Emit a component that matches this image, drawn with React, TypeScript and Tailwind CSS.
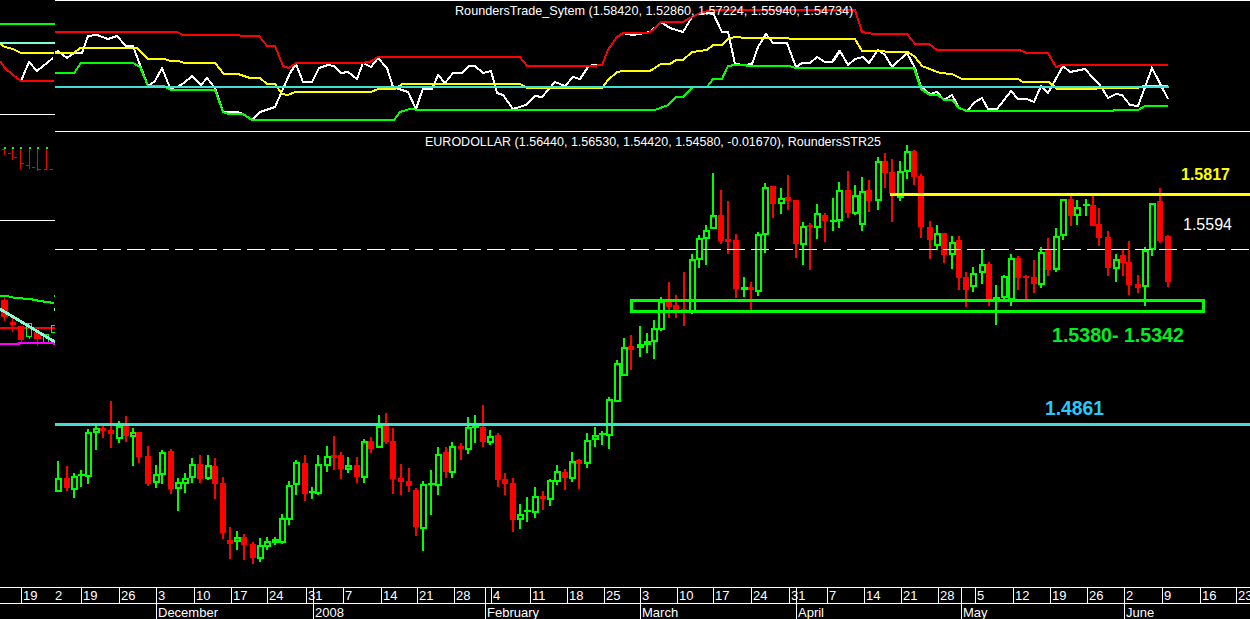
import React from "react";

type C = [number, number, number, number, number, 0 | 1];
const R: 0 = 0;
const G: 1 = 1;

const groupA: C[] = [
  [25,213,305,265,305,G],[50,228,303,264,295,R],[71,250,323,259,299,G],[92,240,291,252,258,G],[113,118,281,127,260,G],
  [138,108,180,115,130,G],[159,108,143,113,122,R],[183,33,174,121,132,R],[207,94,159,108,147,G],[228,78,156,108,138,R],
  [249,114,228,127,140,G],[268,126,219,126,201,R],[294,168,288,198,282,R],[318,226,293,253,280,G],[337,181,282,187,255,G],
  [363,178,312,183,297,R],[384,265,363,277,298,G],[405,250,309,263,281,G],[425,205,279,223,265,G],[450,196,279,222,267,R],
  [474,196,270,226,268,G],[494,205,327,228,282,R],[519,262,447,279,429,R],[540,412,507,450,462,R],[561,423,480,442,455,G],
  [582,432,510,441,465,R],[609,456,522,462,504,R],[630,445,516,465,507,G],[650,441,480,453,472,G],[675,441,465,446,459,G],
  [696,373,462,385,458,G],[717,274,405,285,389,G],[738,210,315,216,286,G],[765,195,333,219,312,R],[786,292,327,303,309,G],
  [805,195,315,221,312,G],[831,168,246,197,227,G],[852,138,240,195,204,R],[873,186,267,195,237,R],
];
const groupB: C[] = [
  [25,201,249,226,240,G],[50,201,279,225,261,R],[72,148,279,153,263,G],[92,141,189,153,177,R],[117,75,173,108,173,G],
  [138,69,161,108,156,R],[159,114,312,153,267,R],[183,222,315,264,276,R],[207,234,306,273,288,R],[228,294,438,300,411,R],
  [248,273,483,283,416,G],[273,240,375,279,285,G],[294,172,315,191,287,G],[318,171,264,186,246,R],[337,156,264,169,248,G],
  [363,159,210,168,177,R],[384,81,192,111,179,G],[405,75,159,108,114,G],[429,46,171,111,156,R],[451,120,165,137,159,G],
  [474,129,291,135,270,R],[494,249,315,267,282,R],[519,264,426,279,390,R],[540,342,417,373,391,G],[561,321,396,360,367,G],
  [585,291,384,319,368,G],[609,303,360,318,327,R],[630,267,348,271,329,G],[650,225,285,244,275,G],[675,237,300,246,264,R],
  [696,186,276,214,266,G],[716,207,297,210,221,R],[742,129,234,150,222,G],[765,111,171,136,151,G],[786,123,165,129,136,G],
  [806,21,177,28,139,G],[831,-90,35,-81,35,G],
];
const groupC: C[] = [
  [72,534,648,560,648,G],[92,525,630,558,570,R],[120,499,591,552,564,G],[141,519,579,543,555,G],[162,480,597,505,547,G],
  [182,411,513,423,510,G],[207,366,474,426,441,R],[228,405,474,434,449,R],[252,336,498,447,451,R],[276,282,462,298,456,G],
  [297,226,324,235,301,G],[318,196,315,209,238,G],[338,39,208,166,208,G],[363,90,252,165,243,R],[384,123,282,237,246,R],
  [407,222,414,240,387,R],[431,351,411,381,390,G],[453,366,450,381,390,R],[474,216,408,223,396,G],[494,69,279,82,226,G],
  [519,78,174,78,132,R],[543,84,162,115,132,G],[564,45,150,111,123,R],[588,120,294,120,252,R],[609,186,315,199,255,G],
  [630,189,330,195,201,R],[651,132,237,160,204,G],[675,159,246,165,183,R],[699,114,213,180,186,G],[718,66,204,91,184,G],
  [744,33,174,90,159,R],[765,75,165,106,162,G],[786,51,213,92,195,G],[806,60,156,90,123,R],[834,-9,150,4,124,G],
];
const groupD: C[] = [
  [14,38,144,64,98,R],[36,57,246,96,162,R],[60,64,184,94,175,G],[81,15,116,34,97,G],[102,30,135,34,112,R],
  [123,102,295,108,261,R],[150,243,358,261,300,R],[171,255,330,278,318,G],[191,278,369,280,345,R],[216,289,387,306,345,G],
  [237,289,450,300,414,R],[258,396,500,411,450,R],[280,381,456,398,442,G],[306,330,432,371,400,G],[327,366,498,372,480,R],
  [348,436,555,472,480,G],[372,405,480,408,474,G],[393,342,498,354,480,G],[415,348,450,354,414,R],[438,405,476,408,413,R],
  [462,360,459,411,432,R],[483,321,444,336,435,G],[503,294,408,327,390,R],[528,264,396,288,390,G],[549,177,300,177,288,G],
  [573,165,258,177,228,R],[592,180,255,202,228,G],[617,178,228,192,198,G],[639,165,258,195,258,R],[658,204,318,252,294,R],
  [684,273,408,291,384,R],[707,342,426,356,386,G],[729,330,408,345,369,R],[748,303,465,366,435,R],[774,405,459,432,444,R],
  [795,321,498,330,441,G],[815,189,348,190,330,G],[840,144,309,183,303,R],[864,285,441,288,426,R],
];

const toReal = (g: C[], ox: number, oy: number): C[] =>
  g.map(([x, wt, wb, bt, bb, c]) => [
    Math.round(ox + x / 3),
    Math.round(oy + wt / 3),
    Math.round(oy + wb / 3),
    Math.round(oy + bt / 3),
    Math.round(oy + bb / 3),
    c,
  ]);

const candles: C[] = [
  ...toReal(groupA, 50, 390),
  ...toReal(groupB, 340, 390),
  ...toReal(groupC, 600, 160),
  ...toReal(groupD, 880, 140),
];

const pts = (p: number[], ox: number) => {
  const o: string[] = [];
  for (let i = 0; i < p.length; i += 2) o.push(`${Math.round(ox + p[i] / 3)},${Math.round(p[i + 1] / 3)}`);
  return o.join(" ");
};

const red =
  pts([165,96,530,96,550,104,715,104,725,107,778,107,800,137,825,137,848,198,868,204,888,189,1080,189,1110,186,1135,171,1260,171], 0) + " " +
  pts([300,171,320,198,515,198,547,194,565,150,590,110,610,98,685,98,700,90,722,66,790,66,815,50,840,40,875,31,1260,31], 420) + " " +
  pts([75,31,95,95,133,101,232,101,255,131,298,131,320,149,568,149,590,160,655,160,678,201,697,195,1013,195], 830);
const yellow =
  pts([165,158,222,158,240,144,410,144,445,177,495,177,510,182,535,182,555,189,645,189,672,221,715,222,750,234,780,234,800,252,825,252,845,282,865,286,885,275,1113,275,1135,267,1185,266,1205,252,1260,252], 0) + " " +
  pts([300,252,320,264,547,264,565,240,590,216,610,212,690,212,722,191,750,191,768,180,790,180,815,157,860,150,878,134,905,134,928,114,950,110,975,114,1105,114,1110,117,1260,117], 420) + " " +
  pts([75,117,97,152,235,156,255,170,275,198,330,219,365,221,395,238,565,238,580,245,658,245,680,267,925,265,940,258,1013,258], 830);
const green =
  pts([165,218,222,218,242,188,400,188,420,200,445,258,492,258,512,269,645,269,670,335,685,342,730,342,755,359,1183,359,1200,336,1230,326,1260,330], 0) + " " +
  pts([705,329,745,316,768,290,790,290,818,262,860,262,880,238,905,236,925,198,945,194,975,194,985,198,1110,198,1125,203,1260,203], 420) + " " +
  pts([253,203,272,267,300,284,325,284,343,299,365,299,388,323,410,332,850,332,852,330,925,329,945,317,1013,317], 830);
const white =
  pts([165,158,175,152,200,174,222,158,245,158,265,107,290,104,325,117,352,107,378,137,400,137,420,195,445,258,465,243,487,204,510,265,530,262,552,250,577,228,602,255,622,234,645,265,670,335,710,336,730,343,755,359,780,335,825,320,870,220,888,192,910,246,935,246,958,203,985,195,1003,198,1022,218,1045,215,1070,238,1088,189,1112,201,1135,174,1160,204,1180,262,1225,277,1248,326,1260,290], 0) + " " +
  pts([10,268,35,268,55,225,75,249,98,218,125,220,148,197,165,197,188,218,212,212,232,280,250,285,278,326,318,315,345,288,365,290,405,246,435,257,458,232,480,236,503,200,515,195,547,194,565,150,590,110,610,100,640,104,690,95,722,66,750,84,790,96,815,50,840,40,880,40,905,96,925,96,945,192,975,194,995,192,1015,140,1037,102,1060,130,1100,130,1127,200,1145,188,1170,188,1190,172,1215,185,1237,185,1260,150], 420) + " " +
  pts([10,186,30,152,55,195,75,178,100,172,118,188,143,150,165,165,185,200,232,160,255,205,272,262,300,283,320,275,343,299,365,285,388,325,410,332,435,305,457,295,475,328,500,328,543,272,565,296,590,296,612,305,632,257,655,280,700,198,720,216,765,206,790,235,810,255,835,295,857,282,877,285,900,315,925,318,967,204,1013,298], 830);

// x position, label, has a tick line
type Cell = [number, string, boolean];
const weekCells: Cell[] = [
  [0,"",false],[21,"19",true],[54,"2",false],[81,"19",true],[119,"26",true],[156,"3",true],[194,"10",true],[231,"17",true],[267,"24",true],
  [306,"31",true],[313,"",true],[343,"7",true],[381,"14",true],[417,"21",true],[454,"28",true],[485,"",true],[491,"4",true],[530,"11",true],
  [567,"18",true],[604,"25",true],[640,"3",true],[677,"10",true],[713,"17",true],[751,"24",true],[789,"31",true],[796,"",true],[827,"7",true],
  [864,"14",true],[901,"21",true],[938,"28",true],[961,"",true],[975,"5",true],[1013,"12",true],[1050,"19",true],[1087,"26",true],[1124,"2",true],
  [1162,"9",true],[1200,"16",true],[1236,"23",true],
];
const monthCells: Cell[] = [
  [0,"",false],[156,"December",true],[313,"2008",true],[485,"February",true],[640,"March",true],[796,"April",true],[961,"May",true],[1124,"June",true],
];

function AxisRow({ cells, className }: { cells: Cell[]; className: string }) {
  return (
    <div className={`flex w-[1250px] overflow-hidden ${className}`}>
      {cells.map(([x, t, line], i) => (
        <div
          key={x}
          className={`shrink-0 overflow-visible whitespace-nowrap pl-[1px] ${line ? "border-l border-white" : ""}`}
          style={{ width: (i + 1 < cells.length ? cells[i + 1][0] : 1250) - x }}
        >
          {t}
        </div>
      ))}
    </div>
  );
}

const Rect = ({ x, y, w, h, f }: { x: number; y: number; w: number; h: number; f: string }) => (
  <rect x={x} y={y} width={w} height={h} fill={f} />
);

function TopChart() {
  return (
    <svg width={1250} height={131} viewBox="0 0 1250 131" shapeRendering="crispEdges" className="block">
      <rect x={55} y={0} width={1195} height={1} fill="#fff" />
      <rect x={0} y={114} width={55} height={1} fill="#fff" />
      <rect x={0} y={23} width={55} height={2} fill="#00ff00" />
      <rect x={0} y={42} width={55} height={2} fill="#7fffd4" />
      <g fill="none" strokeWidth={2}>
        <polyline points="0,44 5,47 13,49 21,53 54,53" stroke="#ffff00" />
        <polyline points="21,81 29,62 37,71 53,58" stroke="#fff" />
        <polyline points="0,61 5,68 13,75 21,81 54,81" stroke="#ff0000" />
        <polyline points={white} stroke="#fff" />
        <polyline points={green} stroke="#00ff00" />
        <polyline points={yellow} stroke="#ffff00" />
        <polyline points={red} stroke="#ff0000" />
      </g>
      <rect x={55} y={86} width={1114} height={2} fill="#40e0d0" />
    </svg>
  );
}

function MainChart() {
  const dashes: number[] = [];
  for (let x = 55; x < 1250; x += 24) dashes.push(x);
  return (
    <svg width={1250} height={456} viewBox="0 131 1250 456" shapeRendering="crispEdges" className="block">
      <rect x={55} y={131} width={1195} height={1} fill="#fff" />
      <rect x={0} y={220} width={55} height={1} fill="#fff" />

      {/* left strip, upper */}
      {[4, 12, 20, 29, 37, 46].map((x, i) => (
        <g key={x}>
          <rect x={x} y={147} width={1} height={[8, 13, 22, 22, 24, 22][i]} fill="#ff0000" />
          <rect x={x} y={147} width={2} height={2} fill="#00ff00" />
        </g>
      ))}
      {[[2,149],[8,153],[14,157],[21,163],[26,165],[32,167],[38,169],[44,169],[50,169]].map(([x, y]) => (
        <rect key={x} x={x} y={y} width={3} height={1} fill="#ff0000" />
      ))}

      {/* left strip, lower */}
      <polyline points="0,296 7,296 15,298 30,299 40,301 54,303" fill="none" stroke="#00ff00" strokeWidth={2} />
      <rect x={0} y={327} width={55} height={2} fill="#ff0000" />
      <rect x={4} y={297} width={1} height={4} fill="#ff0000" />
      <Rect x={1} y={300} w={7} h={17} f="#ff0000" />
      <Rect x={4} y={317} w={1} h={4} f="#ff0000" />
      <Rect x={10} y={322} w={6} h={3} f="#ff0000" />
      <Rect x={12} y={317} w={1} h={15} f="#ff0000" />
      <Rect x={18} y={326} w={6} h={14} f="#ff0000" />
      <Rect x={21} y={340} w={1} h={3} f="#ff0000" />
      <rect x={26} y={323} width={5} height={13} fill="none" stroke="#00ff00" />
      <Rect x={29} y={336} w={1} h={3} f="#00ff00" />
      <Rect x={34} y={332} w={7} h={7} f="#ff0000" />
      <Rect x={37} y={339} w={1} h={7} f="#ff0000" />
      <rect x={43} y={334} width={5} height={8} fill="none" stroke="#00ff00" />
      <polyline points="0,309 55,342" fill="none" stroke="#7fffd4" strokeWidth={3} />
      <polyline points="0,344 19,344 19,343 53,343 55,345" fill="none" stroke="#ff00ff" strokeWidth={2} />
      <Rect x={54} y={295} w={1} h={2} f="#00ff00" />
      <Rect x={54} y={308} w={1} h={3} f="#7fffd4" />
      <Rect x={51} y={325} w={4} h={1} f="#00ff00" />
      <Rect x={51} y={332} w={4} h={1} f="#00ff00" />
      <Rect x={51} y={325} w={1} h={8} f="#00ff00" />

      {/* candles */}
      {candles.map(([x, wt, wb, bt, bb, c]) => {
        const col = c ? "#00ff00" : "#ff0000";
        const w = c ? 7 : 6;
        const lx = x - 3;
        return (
          <g key={`${x}-${wt}`}>
            <rect x={x - 1} y={wt} width={2} height={Math.max(1, wb - wt)} fill={col} />
            <rect x={lx} y={bt} width={w} height={Math.max(2, bb - bt)} fill={col} />
            {c === 1 && bb - bt > 4 && <rect x={lx + 2} y={bt + 2} width={3} height={bb - bt - 4} fill="#000" />}
          </g>
        );
      })}

      {/* levels */}
      <rect x={55} y={423} width={1195} height={3} fill="#40e0d0" />
      <rect x={890} y={193} width={360} height={3} fill="#ffff00" />
      {dashes.map((x) => (
        <rect key={x} x={x} y={249} width={18} height={1} fill="#fff" />
      ))}
      <rect x={630} y={299} width={575} height={3} fill="#00ff00" />
      <rect x={630} y={310} width={575} height={3} fill="#00ff00" />
      <rect x={630} y={299} width={3} height={14} fill="#00ff00" />
      <rect x={1202} y={299} width={3} height={14} fill="#00ff00" />
    </svg>
  );
}

export default function App() {
  const font = { fontFamily: '"Liberation Sans", Arial, sans-serif' };
  return (
    <div className="w-[1250px] h-[619px] bg-black overflow-hidden text-white flex flex-col" style={font}>
      <section className="relative h-[131px] shrink-0">
        <TopChart />
        <div className="absolute left-[455px] top-[4px] text-[12.63px] leading-[15px] whitespace-nowrap">
          RoundersTrade_Sytem (1.58420, 1.52860, 1.57224, 1.55940, 1.54734)
        </div>
      </section>

      <section className="relative h-[456px] shrink-0">
        <MainChart />
        <div className="absolute left-[425px] top-[4px] text-[12.5px] leading-[15px] whitespace-nowrap">
          EURODOLLAR (1.56440, 1.56530, 1.54420, 1.54580, -0.01670), RoundersSTR25
        </div>
        <div className="absolute left-[1181px] top-[35px] text-[16px] leading-[18px] font-bold text-[#ffff00]">1.5817</div>
        <div className="absolute left-[1183px] top-[85px] text-[16px] leading-[18px]">1.5594</div>
        <div className="absolute left-[1052px] top-[193px] text-[19.6px] leading-[22px] font-bold text-[#00ee22] whitespace-nowrap">1.5380- 1.5342</div>
        <div className="absolute left-[1045px] top-[267px] text-[19.3px] leading-[22px] font-bold text-[#22ccff]">1.4861</div>
      </section>

      <footer className="h-[32px] shrink-0 flex flex-col border-t border-white text-[13px]">
        <AxisRow cells={weekCells} className="h-[16px] leading-[16px] border-b border-white box-content" />
        <AxisRow cells={monthCells} className="h-[15px] leading-[17px]" />
      </footer>
    </div>
  );
}
